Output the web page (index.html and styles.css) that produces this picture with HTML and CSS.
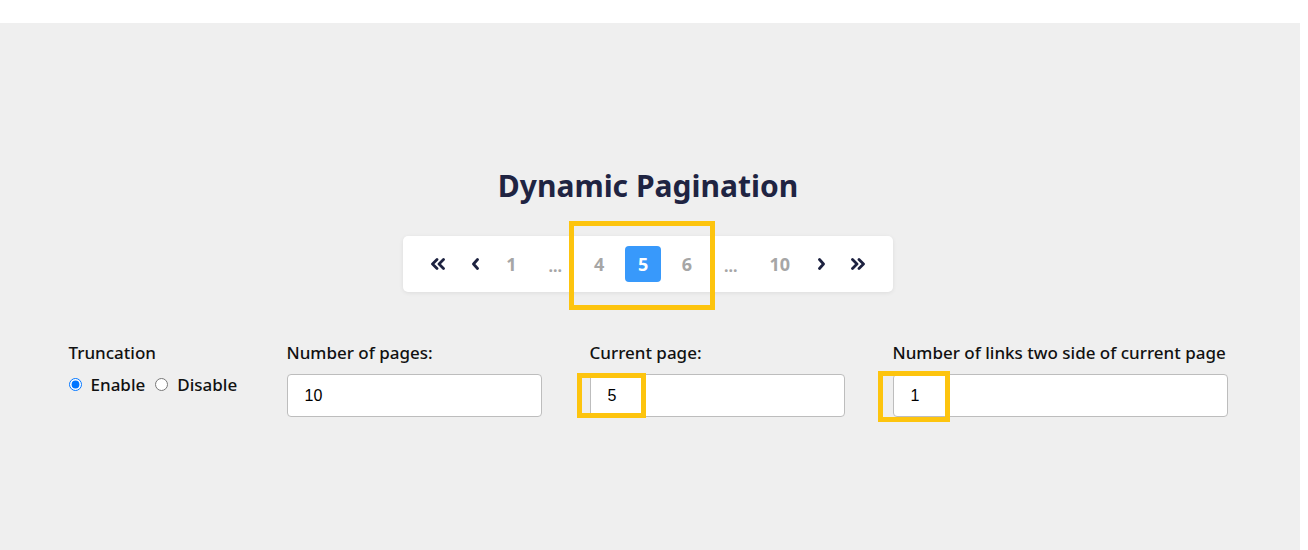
FILE: index.html
```html
<!DOCTYPE html>
<html lang="en">
<head>
    <meta charset="UTF-8">
    <meta name="viewport" content="width=device-width, initial-scale=1.0">
    <title>Dynamic Pagination</title>
    <link rel="stylesheet" href="styles.css">
</head>
<body>
    <div class="page">
        <h1 class="title">Dynamic Pagination</h1>

        <div class="pagination-wrap">
            <ul class="pagination">
                <li class="page-item arrow first">
                    <svg width="16" height="12" viewBox="0 0 16 12"><polyline points="7,1.5 2.5,6 7,10.5"/><polyline points="13.5,1.5 9,6 13.5,10.5"/></svg>
                </li>
                <li class="page-item arrow prev">
                    <svg width="9" height="12" viewBox="0 0 9 12"><polyline points="6.5,1.5 2.5,6 6.5,10.5"/></svg>
                </li>
                <li class="page-item">1</li>
                <li class="page-item dots">...</li>
                <li class="page-item">4</li>
                <li class="page-item active">5</li>
                <li class="page-item">6</li>
                <li class="page-item dots">...</li>
                <li class="page-item wide">10</li>
                <li class="page-item arrow next">
                    <svg width="9" height="12" viewBox="0 0 9 12"><polyline points="2.5,1.5 6.5,6 2.5,10.5"/></svg>
                </li>
                <li class="page-item arrow last">
                    <svg width="16" height="12" viewBox="0 0 16 12"><polyline points="2.5,1.5 7,6 2.5,10.5"/><polyline points="9,1.5 13.5,6 9,10.5"/></svg>
                </li>
            </ul>
            <div class="highlight highlight-pages"></div>
        </div>

        <div class="controls">
            <div class="field">
                <p class="field-label">Truncation</p>
                <div class="radios">
                    <label class="radio"><input type="radio" name="trunc" checked> Enable</label>
                    <label class="radio"><input type="radio" name="trunc"> Disable</label>
                </div>
            </div>
            <div class="field">
                <p class="field-label">Number of pages:</p>
                <input class="text-input" type="text" value="10">
            </div>
            <div class="field">
                <p class="field-label">Current page:</p>
                <div class="input-wrap">
                    <input class="text-input" type="text" value="5">
                    <div class="highlight highlight-current"></div>
                </div>
            </div>
            <div class="field">
                <p class="field-label">Number of links two side of current page</p>
                <div class="input-wrap">
                    <input class="text-input" type="text" value="1">
                    <div class="highlight highlight-links"></div>
                </div>
            </div>
        </div>
    </div>
</body>
</html>
```

FILE: styles.css
```css
body {
    margin: 0;
    padding: 0;
    background-color: #ffffff;
    font-family: 'Noto Sans', sans-serif;
}

.page {
    width: 1300px;
    height: 527px;
    margin-top: 23px;
    background-color: #efefef;
    box-sizing: border-box;
    padding-top: 145px;
    display: flex;
    flex-direction: column;
    align-items: center;
}

.title {
    margin: 0 0 0 -4px;
    font-size: 30px;
    line-height: 36px;
    font-weight: 700;
    color: #1f2442;
}

.pagination-wrap {
    position: relative;
    margin-top: 32px;
    margin-left: -4px;
}

.pagination {
    list-style: none;
    margin: 0;
    padding: 0 18px 0 16px;
    height: 56px;
    width: 490px;
    box-sizing: border-box;
    background-color: #ffffff;
    border-radius: 5px;
    box-shadow: 0 1px 4px rgba(0, 0, 0, 0.08);
    display: flex;
    align-items: center;
    gap: 7px;
}

.page-item {
    width: 37px;
    height: 36px;
    border-radius: 4px;
    display: flex;
    align-items: center;
    justify-content: center;
    font-size: 18px;
    font-weight: 700;
    color: #a6a6a6;
}

.page-item.dots {
    font-size: 16px;
    padding-top: 4px;
    box-sizing: border-box;
}

.page-item.wide {
    width: 47px;
}

.page-item.active {
    background-color: #3899fb;
    color: #ffffff;
}

.arrow svg {
    fill: none;
    stroke: #1d2240;
    stroke-width: 2.8;
    stroke-linecap: round;
    stroke-linejoin: round;
}

.arrow.first { width: 39px; }
.arrow.prev { width: 21px; }
.arrow.next { width: 23px; }
.arrow.last { width: 35px; }

.highlight {
    position: absolute;
    border: 5px solid #fdc40e;
    box-sizing: border-box;
    pointer-events: none;
}

.highlight-pages {
    left: 166px;
    top: -15px;
    width: 146px;
    height: 89px;
}

.controls {
    margin-top: 51px;
    margin-left: -4px;
    display: grid;
    grid-template-columns: 170px 255px 255px 335px;
    column-gap: 48px;
}

.field-label {
    margin: 0 0 11px;
    font-size: 17px;
    line-height: 20px;
    font-weight: 500;
    color: #111111;
    white-space: nowrap;
}

.radios {
    display: flex;
    align-items: center;
    gap: 10px;
    height: 20px;
}

.radio {
    display: flex;
    align-items: center;
    font-size: 17px;
    font-weight: 500;
    color: #111111;
}

.radio input {
    margin: 0 9px 0 0;
    width: 13px;
    height: 13px;
}

.input-wrap {
    position: relative;
}

.text-input {
    width: 100%;
    height: 43px;
    box-sizing: border-box;
    border: 1px solid #bdbdbd;
    border-radius: 4px;
    padding: 0 17px;
    font-family: 'Liberation Sans', Arial, sans-serif;
    font-size: 16px;
    color: #000000;
    background-color: #ffffff;
}

.highlight-current {
    left: -13px;
    top: -1px;
    width: 69px;
    height: 45px;
}

.highlight-links {
    left: -15px;
    top: -3px;
    width: 72px;
    height: 51px;
}
```
